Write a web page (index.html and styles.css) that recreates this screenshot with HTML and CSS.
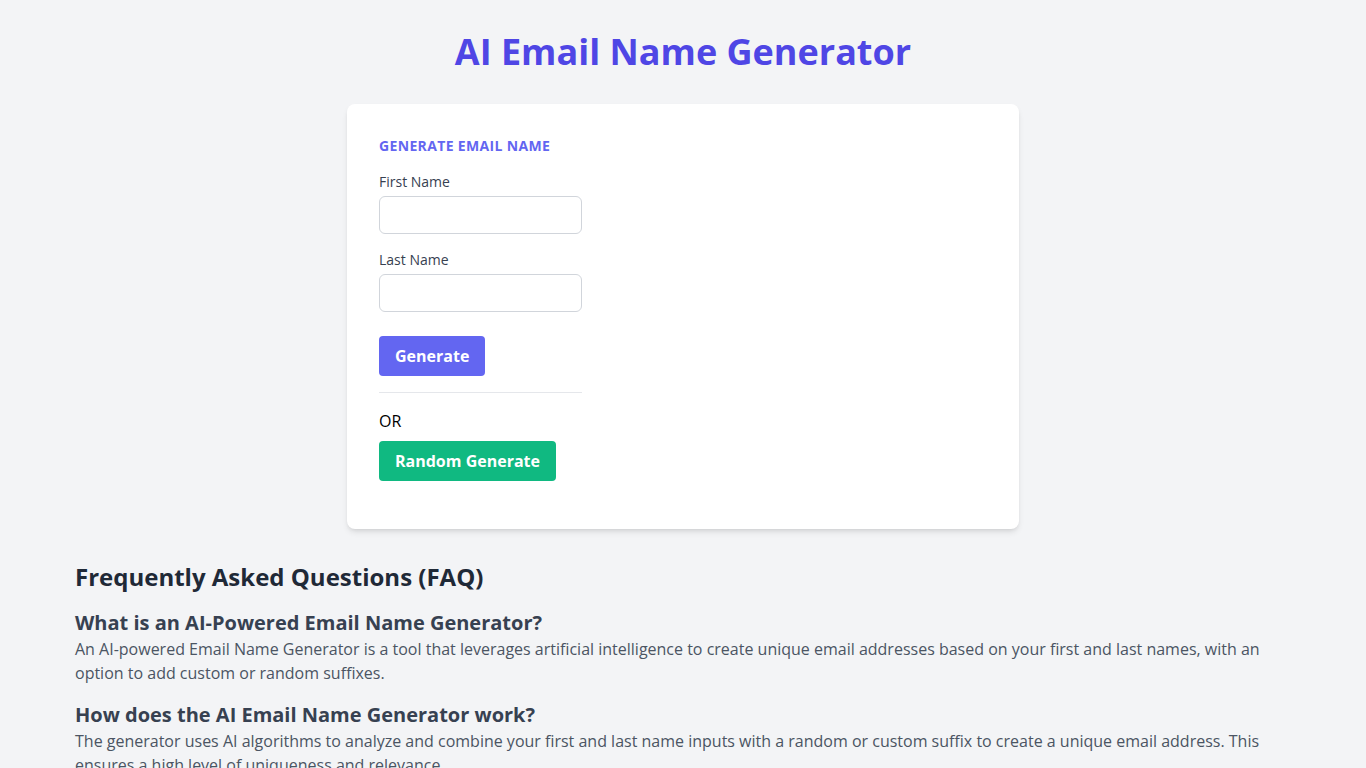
FILE: index.html
```html
<!DOCTYPE html>
<html lang="en">
<head>
<meta charset="UTF-8">
<meta name="viewport" content="width=device-width, initial-scale=1.0">
<title>AI Email Name Generator</title>
<link rel="stylesheet" href="styles.css">
</head>
<body>
<h1 class="title">AI Email Name Generator</h1>
<div class="card">
<h2 class="card-heading">Generate Email Name</h2>
<form class="gen-form">
<label for="firstName">First Name</label>
<input type="text" id="firstName">
<label for="lastName">Last Name</label>
<input type="text" id="lastName">
<button type="button" class="btn btn-primary">Generate</button>
<hr class="divider">
<p class="or">OR</p>
<button type="button" class="btn btn-green">Random Generate</button>
</form>
</div>
<section class="faq">
<h2>Frequently Asked Questions (FAQ)</h2>
<h3>What is an AI-Powered Email Name Generator?</h3>
<p>An AI-powered Email Name Generator is a tool that leverages artificial intelligence to create unique email addresses based on your first and last names, with an option to add custom or random suffixes.</p>
<h3>How does the AI Email Name Generator work?</h3>
<p>The generator uses AI algorithms to analyze and combine your first and last name inputs with a random or custom suffix to create a unique email address. This ensures a high level of uniqueness and relevance.</p>
</section>
</body>
</html>
```

FILE: styles.css
```css
body {
font-family: "Open Sans", "Noto Sans", sans-serif;
background-color: #f3f4f6;
margin: 0;
padding: 32px 0 40px;
}
.title {
color: #4f46e5;
font-size: 36px;
line-height: 40px;
font-weight: 700;
text-align: center;
margin: 0 0 32px;
}
.card {
max-width: 672px;
margin: 0 auto;
background-color: #fff;
padding: 32px;
box-sizing: border-box;
border-radius: 8px;
box-shadow: 0 4px 6px -1px rgba(0, 0, 0, 0.1), 0 2px 4px -2px rgba(0, 0, 0, 0.1);
}
.card-heading {
color: #6366f1;
font-size: 14px;
line-height: 20px;
font-weight: 700;
letter-spacing: 0.35px;
text-transform: uppercase;
margin: 0 0 16px;
}
.gen-form {
width: 203px;
display: flex;
flex-direction: column;
align-items: flex-start;
padding-bottom: 16px;
}
.gen-form label {
color: #374151;
font-size: 14px;
line-height: 20px;
margin-bottom: 4px;
}
.gen-form input {
width: 100%;
height: 38px;
box-sizing: border-box;
border: 1px solid #d1d5db;
border-radius: 6px;
padding: 8px 12px;
font: inherit;
margin: 0 0 16px;
}
.btn {
font-family: inherit;
font-size: 16px;
line-height: 24px;
font-weight: 700;
color: #fff;
border: none;
border-radius: 4px;
padding: 8px 16px;
cursor: pointer;
}
.btn-primary {
background-color: #6366f1;
margin-top: 8px;
}
.btn-green {
background-color: #10b981;
}
.divider {
width: 100%;
border: none;
border-top: 1px solid #e5e7eb;
margin: 16px 0;
}
.or {
margin: 0 0 8px;
line-height: 24px;
color: #000;
}
.faq {
padding: 0 75px;
margin-top: 32px;
}
.faq h2 {
color: #1f2937;
font-size: 24px;
line-height: 32px;
font-weight: 700;
margin: 0 0 16px;
}
.faq h3 {
color: #374151;
font-size: 20px;
line-height: 28px;
font-weight: 700;
margin: 0;
}
.faq p {
color: #4b5563;
font-size: 16px;
line-height: 24px;
margin: 0 0 16px;
}
```
